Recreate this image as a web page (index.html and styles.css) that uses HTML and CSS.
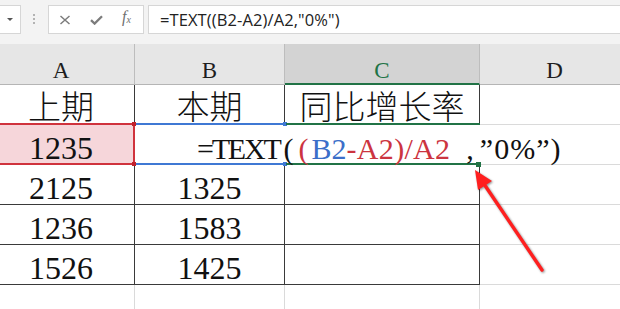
FILE: index.html
```html
<!DOCTYPE html>
<html lang="zh">
<head>
<meta charset="utf-8">
<title>TEXT 公式</title>
<link rel="stylesheet" href="styles.css">
</head>
<body>
<div class="toolbar">
  <div class="namebox"><span class="caret"></span></div>
  <div class="grip"><i></i><i></i><i></i></div>
  <div class="fbtns">
    <svg class="ic-x" width="12" height="10" viewBox="0 0 12 10"><path d="M1.5 1L10.5 9M10.5 1L1.5 9" fill="none" stroke="#7c7c7c" stroke-width="1.5"/></svg>
    <svg class="ic-ok" width="13" height="10" viewBox="0 0 13 10"><path d="M1 5.2L4.6 8.6L12 1.2" fill="none" stroke="#7c7c7c" stroke-width="2.3"/></svg>
    <span class="fx"><i>f</i><sub>x</sub></span>
  </div>
  <div class="formula">=TEXT((B2-A2)/A2,"0%")</div>
</div>

<div class="sheet">
  <div class="h">A</div><div class="h">B</div><div class="h sel">C</div><div class="h">D</div>

  <div class="c cjk">上期</div><div class="c cjk">本期</div><div class="c cjk">同比增长率</div><div class="c x"></div>

  <div class="c pink">1235</div><div class="c open"></div><div class="c open"></div><div class="c x"></div>

  <div class="c">2125</div><div class="c">1325</div><div class="c"></div><div class="c x"></div>

  <div class="c">1236</div><div class="c">1583</div><div class="c"></div><div class="c x"></div>

  <div class="c">1526</div><div class="c">1425</div><div class="c"></div><div class="c x"></div>

  <div class="c g"></div><div class="c g"></div><div class="c g"></div><div class="c g"></div>
</div>

<div class="frame red"></div>
<div class="frame blue"></div>
<div class="frame green"></div>

<div class="edit"><span class="fn">=TEXT</span><span class="pp">(<span class="rd">(</span></span><span class="bl">B2</span><span class="rd mid">-A2)/A2</span><span class="cm">,</span><span class="tail">”0%”)</span></div>

<svg class="arrow" width="620" height="309" viewBox="0 0 620 309">
  <line x1="542" y1="270" x2="484" y2="184" stroke="#ff1f1f" stroke-width="3.4" stroke-linecap="round"/>
  <polygon points="475,170 492,181 478,190" fill="#ff1f1f"/>
</svg>
</body>
</html>
```

FILE: styles.css
```css
html, body {
  margin: 0;
  padding: 0;
}

body {
  position: relative;
  width: 620px;
  height: 309px;
  overflow: hidden;
  background: #ffffff;
  font-family: "Liberation Serif", "Noto Sans CJK SC", serif;
}

/* ---------- formula toolbar ---------- */
.toolbar {
  display: flex;
  align-items: flex-start;
  height: 44px;
  padding-top: 5px;
  box-sizing: border-box;
  background: #f3f3f3;
}

.namebox {
  display: flex;
  align-items: center;
  justify-content: flex-end;
  width: 41px;
  height: 29px;
  margin-left: -20px;
  padding-right: 7px;
  box-sizing: border-box;
  background: #ffffff;
  border: 1px solid #d6d6d6;
}

.caret {
  width: 0;
  height: 0;
  margin-top: -1px;
  border-left: 3px solid transparent;
  border-right: 3px solid transparent;
  border-top: 3px solid #555555;
}

.grip {
  display: flex;
  flex-direction: column;
  gap: 2px;
  width: 27px;
  padding: 9px 0 0 12px;
  box-sizing: border-box;
}

.grip i {
  display: block;
  width: 2px;
  height: 2px;
  background: #b3b3b3;
}

.fbtns {
  display: flex;
  align-items: center;
  width: 96px;
  height: 29px;
  padding-left: 10px;
  box-sizing: border-box;
  background: #ffffff;
  border: 1px solid #d6d6d6;
}

.ic-x { margin-right: 19px; }
.ic-ok { margin-right: 19px; }

.fx {
  font-family: "Liberation Serif", serif;
  color: #707070;
  font-size: 16px;
  line-height: 16px;
  margin-top: -2px;
}

.fx i { font-style: italic; }

.fx sub {
  font-size: 10px;
  font-style: italic;
  vertical-align: -1px;
}

.formula {
  flex: 1;
  height: 29px;
  margin-left: 4px;
  padding: 1px 0 0 11px;
  box-sizing: border-box;
  background: #ffffff;
  border: 1px solid #d6d6d6;
  border-right: none;
  font-family: "Open Sans", "Noto Sans", sans-serif;
  font-size: 16.5px;
  letter-spacing: 0.1px;
  line-height: 26px;
  color: #222222;
  white-space: nowrap;
}

/* ---------- sheet grid ---------- */
.sheet {
  display: grid;
  grid-template-columns: 147px 150px 195px 150px;
  grid-template-rows: 41px repeat(6, 40px);
  margin-left: -12px;
}

.h {
  box-sizing: border-box;
  padding-top: 15px;
  background: #e6e6e6;
  border-right: 1px solid #bdbdbd;
  border-bottom: 1px solid #b5b5b5;
  text-align: center;
  font-size: 23px;
  line-height: 23px;
  color: #1e1e1e;
}

.h.sel {
  background: #d3d3d3;
  color: #217346;
  border-bottom: 2px solid #217346;
}

.c {
  box-sizing: border-box;
  padding-top: 8px;
  border-right: 1px solid #3a3a3a;
  border-bottom: 1px solid #3a3a3a;
  text-align: center;
  font-size: 32px;
  line-height: 31px;
  color: #111111;
  white-space: nowrap;
}

.c.cjk {
  font-size: 33px;
  font-weight: 300;
}

.c.pink {
  background: #f6d6da;
}

.c.open {
  border-right: none;
}

.c.x,
.c.g {
  border-right: 1px solid #dadada;
  border-bottom: 1px solid #dadada;
}

/* ---------- range-finder frames (overlay) ---------- */
.frame {
  position: absolute;
  top: 123px;
  height: 42px;
  box-sizing: border-box;
  border-top: 2px solid;
  border-bottom: 2px solid;
}

.frame::before,
.frame::after {
  content: "";
  position: absolute;
  width: 4px;
  height: 4px;
}

.frame.red {
  left: 0;
  width: 135px;
  border-color: #d0333d;
  border-right: 2px solid #d0333d;
}

.frame.red::before,
.frame.red::after {
  right: -3px;
  background: #c0222c;
}
.frame.red::before { top: -3px; }
.frame.red::after { bottom: -3px; }

.frame.blue {
  left: 136px;
  width: 149px;
  border-color: #3f78d4;
}

.frame.blue::before,
.frame.blue::after {
  right: -2px;
  background: #3f78d4;
}
.frame.blue::before { top: -3px; }
.frame.blue::after { bottom: -3px; }

.frame.green {
  left: 286px;
  width: 194px;
  border-color: #217346;
}

.frame.green::after {
  right: -1px;
  bottom: -4px;
  width: 5px;
  height: 5px;
  background: #217346;
}

/* ---------- in-cell edit text (overlay) ---------- */
.edit {
  position: absolute;
  left: 197px;
  top: 125px;
  display: flex;
  padding-top: 8px;
  font-size: 30px;
  line-height: 31px;
  color: #111111;
  white-space: nowrap;
}

.fn { letter-spacing: -2.2px; }
.pp { padding-left: 4px; letter-spacing: 5px; }
.pp .rd { letter-spacing: 3px; }
.mid { letter-spacing: 0.3px; }
.cm { padding: 0 6px 0 16px; }
.tail { letter-spacing: 1px; }

.rd { color: #cc3440; }
.bl { color: #3b6fc9; }

/* ---------- arrow (overlay) ---------- */
.arrow {
  position: absolute;
  left: 0;
  top: 0;
  pointer-events: none;
  filter: drop-shadow(1.5px 1.5px 1.2px rgba(0, 0, 0, 0.45));
}
```
